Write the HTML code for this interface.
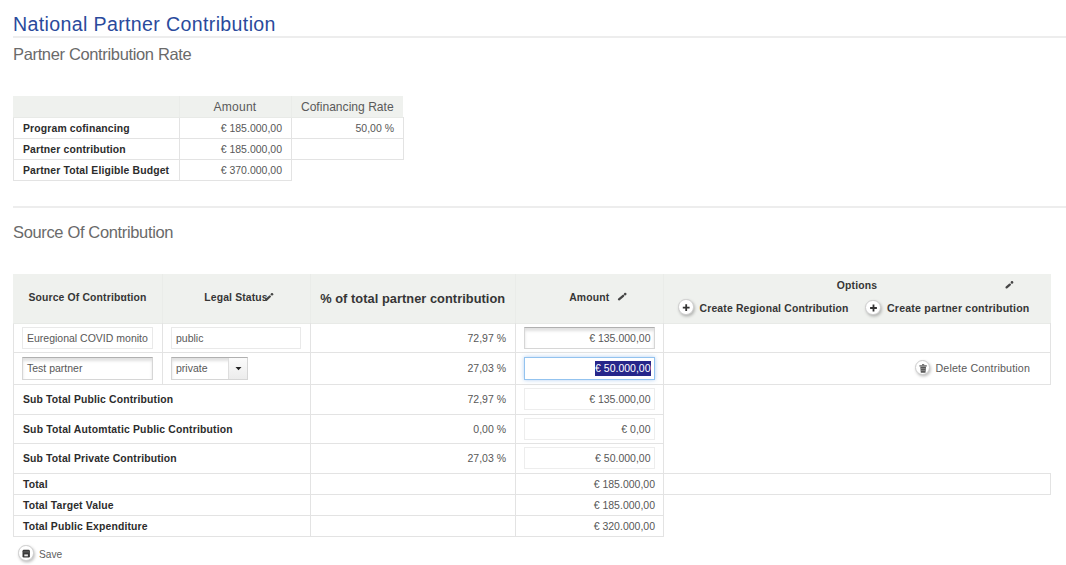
<!DOCTYPE html><html><head><meta charset="utf-8"><style>
html,body{margin:0;padding:0;background:#fff;width:1066px;height:565px;overflow:hidden;position:relative;font-family:"Liberation Sans",sans-serif;}
.t{position:absolute;white-space:nowrap;}
.b{position:absolute;box-sizing:border-box;}
svg{position:absolute;overflow:visible;}
.cb{position:absolute;box-sizing:border-box;width:15.5px;height:15.5px;border-radius:50%;background:#fff;border:1px solid #cdcdcd;box-shadow:1px 1.5px 3px rgba(0,0,0,0.25);}
</style></head><body>
<div class="t" style="left:13.00px;top:12px;width:600px;font-size:19.6px;line-height:24px;color:#2a4a9c;text-align:left;letter-spacing:0.35px;">National Partner Contribution</div>
<div class="b" style="left:13px;top:36px;width:1053px;height:2px;background:#ededed"></div>
<div class="t" style="left:13.00px;top:44px;width:600px;font-size:16.5px;line-height:20px;color:#6a6a6a;text-align:left;letter-spacing:-0.35px;">Partner Contribution Rate</div>
<div class="b" style="left:13px;top:96px;width:390px;height:21px;background:#eff1ee"></div>
<div class="b" style="left:179px;top:96px;width:1px;height:21px;background:#eaece9"></div>
<div class="b" style="left:291px;top:96px;width:1px;height:21px;background:#eaece9"></div>
<div class="b" style="left:13px;top:117px;width:1px;height:64px;background:#e3e3e3"></div>
<div class="b" style="left:179px;top:117px;width:1px;height:64px;background:#e3e3e3"></div>
<div class="b" style="left:291px;top:117px;width:1px;height:64px;background:#e3e3e3"></div>
<div class="b" style="left:403px;top:117px;width:1px;height:43px;background:#e3e3e3"></div>
<div class="b" style="left:13px;top:117px;width:390px;height:1px;background:#e8eae7"></div>
<div class="b" style="left:13px;top:138px;width:390px;height:1px;background:#e3e3e3"></div>
<div class="b" style="left:13px;top:159px;width:390px;height:1px;background:#e3e3e3"></div>
<div class="b" style="left:13px;top:180px;width:279px;height:1px;background:#e3e3e3"></div>
<div class="t" style="left:-65.00px;top:100px;width:600px;font-size:12.1px;line-height:15px;color:#5a5a5a;text-align:center;letter-spacing:0.2px;">Amount</div>
<div class="t" style="left:47.30px;top:100px;width:600px;font-size:12.1px;line-height:15px;color:#5a5a5a;text-align:center;">Cofinancing Rate</div>
<div class="t" style="left:23.00px;top:123px;width:600px;font-size:10.4px;line-height:12px;color:#2c2c2c;text-align:left;font-weight:bold;letter-spacing:0.15px;">Program cofinancing</div>
<div class="t" style="left:23.00px;top:144px;width:600px;font-size:10.4px;line-height:12px;color:#2c2c2c;text-align:left;font-weight:bold;letter-spacing:0.15px;">Partner contribution</div>
<div class="t" style="left:23.00px;top:165px;width:600px;font-size:10.4px;line-height:12px;color:#2c2c2c;text-align:left;font-weight:bold;letter-spacing:0.15px;">Partner Total Eligible Budget</div>
<div class="t" style="left:-318.00px;top:122px;width:600px;font-size:10.5px;line-height:13px;color:#585858;text-align:right;">€ 185.000,00</div>
<div class="t" style="left:-318.00px;top:143px;width:600px;font-size:10.5px;line-height:13px;color:#585858;text-align:right;">€ 185.000,00</div>
<div class="t" style="left:-318.00px;top:164px;width:600px;font-size:10.5px;line-height:13px;color:#585858;text-align:right;">€ 370.000,00</div>
<div class="t" style="left:-206.00px;top:122px;width:600px;font-size:10.5px;line-height:13px;color:#585858;text-align:right;">50,00 %</div>
<div class="b" style="left:13px;top:206px;width:1053px;height:2px;background:#ededed"></div>
<div class="t" style="left:13.00px;top:222px;width:600px;font-size:16.5px;line-height:20px;color:#6a6a6a;text-align:left;letter-spacing:-0.35px;">Source Of Contribution</div>
<div class="b" style="left:13px;top:274px;width:1038px;height:49px;background:#eff1ee"></div>
<div class="b" style="left:162px;top:274px;width:1px;height:49px;background:#eaece9"></div>
<div class="b" style="left:310px;top:274px;width:1px;height:49px;background:#eaece9"></div>
<div class="b" style="left:515px;top:274px;width:1px;height:49px;background:#eaece9"></div>
<div class="b" style="left:663px;top:274px;width:1px;height:49px;background:#eaece9"></div>
<div class="t" style="left:-212.50px;top:292px;width:600px;font-size:10.4px;line-height:12px;color:#363636;text-align:center;font-weight:bold;letter-spacing:0.15px;">Source Of Contribution</div>
<div class="t" style="left:-64.00px;top:292px;width:600px;font-size:10.4px;line-height:12px;color:#363636;text-align:center;font-weight:bold;letter-spacing:0.15px;">Legal Status</div>
<div class="t" style="left:112.70px;top:291px;width:600px;font-size:12.8px;line-height:15px;color:#363636;text-align:center;font-weight:bold;letter-spacing:0.05px;">% of total partner contribution</div>
<div class="t" style="left:289.30px;top:292px;width:600px;font-size:10.4px;line-height:12px;color:#363636;text-align:center;font-weight:bold;letter-spacing:0.15px;">Amount</div>
<div class="t" style="left:557.00px;top:280px;width:600px;font-size:10.4px;line-height:12px;color:#363636;text-align:center;font-weight:bold;letter-spacing:0.15px;">Options</div>
<div class="t" style="left:699.50px;top:303px;width:600px;font-size:10.4px;line-height:12px;color:#363636;text-align:left;font-weight:bold;letter-spacing:0.17px;">Create Regional Contribution</div>
<div class="t" style="left:887.00px;top:302px;width:600px;font-size:10.6px;line-height:13px;color:#363636;text-align:left;font-weight:bold;letter-spacing:0.2px;">Create partner contribution</div>
<div class="b" style="left:13px;top:323px;width:1px;height:214px;background:#e3e3e3"></div>
<div class="b" style="left:13px;top:323px;width:1038px;height:1px;background:#e8eae7"></div>
<div class="b" style="left:13px;top:352px;width:1038px;height:1px;background:#e3e3e3"></div>
<div class="b" style="left:13px;top:384px;width:1038px;height:1px;background:#e3e3e3"></div>
<div class="b" style="left:13px;top:414px;width:651px;height:1px;background:#e3e3e3"></div>
<div class="b" style="left:13px;top:443px;width:651px;height:1px;background:#e3e3e3"></div>
<div class="b" style="left:13px;top:473px;width:1038px;height:1px;background:#e3e3e3"></div>
<div class="b" style="left:13px;top:494px;width:1038px;height:1px;background:#e3e3e3"></div>
<div class="b" style="left:13px;top:515px;width:651px;height:1px;background:#e3e3e3"></div>
<div class="b" style="left:13px;top:536px;width:651px;height:1px;background:#e3e3e3"></div>
<div class="b" style="left:1050px;top:323px;width:1px;height:62px;background:#e3e3e3"></div>
<div class="b" style="left:1050px;top:473px;width:1px;height:22px;background:#e3e3e3"></div>
<div class="b" style="left:162px;top:323px;width:1px;height:61px;background:#e3e3e3"></div>
<div class="b" style="left:310px;top:323px;width:1px;height:214px;background:#e3e3e3"></div>
<div class="b" style="left:515px;top:323px;width:1px;height:214px;background:#e3e3e3"></div>
<div class="b" style="left:663px;top:323px;width:1px;height:214px;background:#e3e3e3"></div>
<div class="b" style="left:22px;top:327px;width:131px;height:22px;border:1px solid #e9e9e9"></div>
<div class="b" style="left:171px;top:327px;width:130px;height:22px;border:1px solid #e9e9e9"></div>
<div class="b" style="left:524px;top:327px;width:131px;height:22px;border:1px solid #d6d6d6;border-top-color:#b0b0b0;box-shadow:inset 0 3px 3px rgba(0,0,0,0.12)"></div>
<div class="t" style="left:27.00px;top:332px;width:600px;font-size:10.5px;line-height:13px;color:#585858;text-align:left;">Euregional COVID monito</div>
<div class="t" style="left:176.00px;top:332px;width:600px;font-size:10.5px;line-height:13px;color:#585858;text-align:left;">public</div>
<div class="t" style="left:-94.00px;top:332px;width:600px;font-size:10.5px;line-height:13px;color:#585858;text-align:right;">72,97 %</div>
<div class="t" style="left:50.50px;top:332px;width:600px;font-size:10.5px;line-height:13px;color:#585858;text-align:right;">€ 135.000,00</div>
<div class="b" style="left:22px;top:357px;width:131px;height:23px;border:1px solid #d6d6d6;border-top-color:#b0b0b0;box-shadow:inset 0 3px 3px rgba(0,0,0,0.12)"></div>
<div class="b" style="left:171px;top:357px;width:77px;height:23px;border:1px solid #d6d6d6;border-top-color:#b0b0b0;box-shadow:inset 0 3px 3px rgba(0,0,0,0.12)"></div>
<div class="b" style="left:228px;top:358px;width:19px;height:21px;background:linear-gradient(#fbfbfb,#ececec);border-left:1px solid #dedede"></div>
<svg style="left:235px;top:366px" width="8" height="5"><path d="M0.5 1H6.5L3.5 4.2Z" fill="#222"/></svg>
<div class="t" style="left:27.00px;top:362px;width:600px;font-size:10.5px;line-height:13px;color:#585858;text-align:left;">Test partner</div>
<div class="t" style="left:176.00px;top:362px;width:600px;font-size:10.5px;line-height:13px;color:#585858;text-align:left;">private</div>
<div class="t" style="left:-94.00px;top:362px;width:600px;font-size:10.5px;line-height:13px;color:#585858;text-align:right;">27,03 %</div>
<div class="b" style="left:524px;top:357px;width:131px;height:23px;border:1px solid #93c3ef;box-shadow:0 0 4px rgba(100,160,230,0.5)"></div>
<div class="b" style="left:595px;top:361px;width:56px;height:15px;background:#26268a"></div>
<div class="t" style="left:50.50px;top:362px;width:600px;font-size:10.5px;line-height:13px;color:#fff;text-align:right;">€ 50.000,00</div>
<div class="t" style="left:430.00px;top:362px;width:600px;font-size:10.7px;line-height:13px;color:#5a5a5a;text-align:right;letter-spacing:0.16px;">Delete Contribution</div>
<div class="t" style="left:23.00px;top:394px;width:600px;font-size:10.4px;line-height:12px;color:#2c2c2c;text-align:left;font-weight:bold;letter-spacing:0.15px;">Sub Total Public Contribution</div>
<div class="t" style="left:23.00px;top:424px;width:600px;font-size:10.4px;line-height:12px;color:#2c2c2c;text-align:left;font-weight:bold;letter-spacing:0.18px;">Sub Total Automtatic Public Contribution</div>
<div class="t" style="left:23.00px;top:453px;width:600px;font-size:10.4px;line-height:12px;color:#2c2c2c;text-align:left;font-weight:bold;letter-spacing:0.15px;">Sub Total Private Contribution</div>
<div class="b" style="left:524px;top:388px;width:131px;height:22px;border:1px solid #ededed"></div>
<div class="t" style="left:-94.00px;top:393px;width:600px;font-size:10.5px;line-height:13px;color:#585858;text-align:right;">72,97 %</div>
<div class="t" style="left:50.50px;top:393px;width:600px;font-size:10.5px;line-height:13px;color:#585858;text-align:right;">€ 135.000,00</div>
<div class="b" style="left:524px;top:418px;width:131px;height:22px;border:1px solid #ededed"></div>
<div class="t" style="left:-94.00px;top:423px;width:600px;font-size:10.5px;line-height:13px;color:#585858;text-align:right;">0,00 %</div>
<div class="t" style="left:50.50px;top:423px;width:600px;font-size:10.5px;line-height:13px;color:#585858;text-align:right;">€ 0,00</div>
<div class="b" style="left:524px;top:447px;width:131px;height:22px;border:1px solid #ededed"></div>
<div class="t" style="left:-94.00px;top:452px;width:600px;font-size:10.5px;line-height:13px;color:#585858;text-align:right;">27,03 %</div>
<div class="t" style="left:50.50px;top:452px;width:600px;font-size:10.5px;line-height:13px;color:#585858;text-align:right;">€ 50.000,00</div>
<div class="t" style="left:23.00px;top:479px;width:600px;font-size:10.4px;line-height:12px;color:#2c2c2c;text-align:left;font-weight:bold;letter-spacing:0.15px;">Total</div>
<div class="t" style="left:23.00px;top:500px;width:600px;font-size:10.4px;line-height:12px;color:#2c2c2c;text-align:left;font-weight:bold;letter-spacing:0.15px;">Total Target Value</div>
<div class="t" style="left:23.00px;top:521px;width:600px;font-size:10.4px;line-height:12px;color:#2c2c2c;text-align:left;font-weight:bold;letter-spacing:0.15px;">Total Public Expenditure</div>
<div class="t" style="left:55.00px;top:478px;width:600px;font-size:10.5px;line-height:13px;color:#585858;text-align:right;">€ 185.000,00</div>
<div class="t" style="left:55.00px;top:499px;width:600px;font-size:10.5px;line-height:13px;color:#585858;text-align:right;">€ 185.000,00</div>
<div class="t" style="left:55.00px;top:520px;width:600px;font-size:10.5px;line-height:13px;color:#585858;text-align:right;">€ 320.000,00</div>
<div class="t" style="left:39.00px;top:549px;width:600px;font-size:10.2px;line-height:12px;color:#5e5e5e;text-align:left;">Save</div>
<div class="cb" style="left:678.05px;top:299.45px"></div>
<svg style="left:0;top:0" width="1" height="1"><path d="M686.2 304.2V311M682.8 307.6H689.6" stroke="#333" stroke-width="1.8"/></svg>
<div class="cb" style="left:865.45px;top:299.85px"></div>
<svg style="left:0;top:0" width="1" height="1"><path d="M873.5 304.6V311.4M870.1 308H876.9" stroke="#333" stroke-width="1.8"/></svg>
<div class="cb" style="left:914.95px;top:359.65px"></div>
<svg style="left:0;top:0" width="1" height="1"><path d="M922 364.2H924.2V365.2H922Z" fill="#555"/><path d="M919.4 365.3H926.8V366.5H919.4Z" fill="#555"/><path d="M920.3 366.8H926L925.5 372.8H920.8Z" fill="#555"/><path d="M921 368.6H925.3M921.1 370.6H925.2" stroke="#bbb" stroke-width="0.5"/></svg>
<div class="cb" style="left:18.15px;top:545.45px"></div>
<svg style="left:0;top:0" width="1" height="1"><rect x="22.5" y="549.8" width="7.4" height="7.8" rx="1.4" fill="#383838"/><path d="M23.4 551.9H29" stroke="#8a8a8a" stroke-width="0.6"/><rect x="24.3" y="554.4" width="3.6" height="1.9" fill="#e8e8e8"/></svg>
<svg style="left:0;top:0" width="1" height="1"><path d="M619 299.3L623.2 295.8" stroke="#464646" stroke-width="2.3" stroke-linecap="round"/><circle cx="625.2" cy="294.1" r="1.3" fill="#464646"/></svg>
<svg style="left:0;top:0" width="1" height="1"><path d="M1006.6 287.4L1009.8 284.6" stroke="#464646" stroke-width="2.3" stroke-linecap="round"/><circle cx="1012" cy="282.4" r="1.3" fill="#464646"/></svg>
<svg style="left:0;top:0" width="1" height="1"><path d="M266.2 299.8L269.8 296.5" stroke="#464646" stroke-width="2.3" stroke-linecap="round"/><circle cx="272" cy="294.3" r="1.3" fill="#464646"/></svg>
<svg style="left:0;top:0" width="1" height="1"><path d="M121.6 297.6L123.3 295.4L125 297.6" stroke="#333" stroke-width="1" fill="none"/></svg>
</body></html>
